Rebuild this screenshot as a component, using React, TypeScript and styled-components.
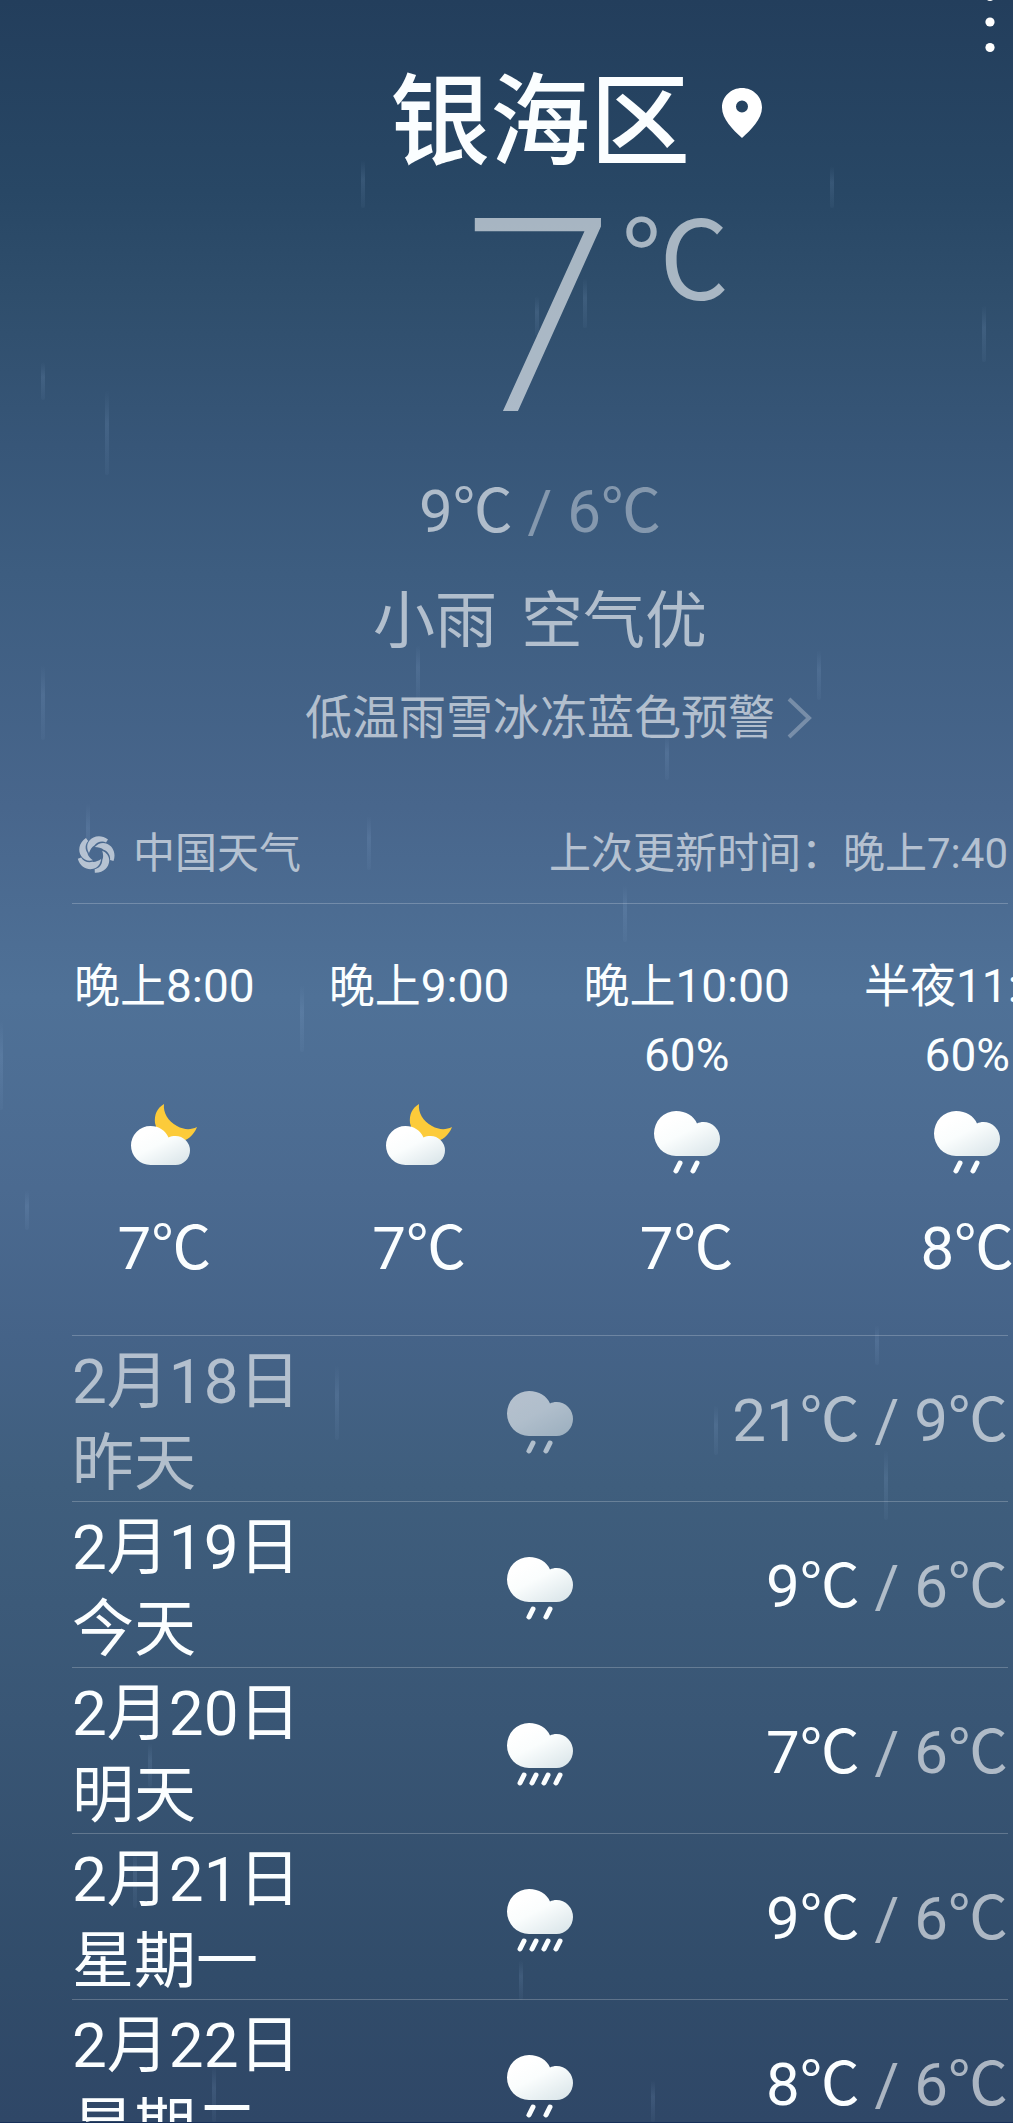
import React, { useId } from "react";
import styled, { createGlobalStyle, css } from "styled-components";

type Sky = "night" | "drizzle" | "rain";

interface Hour {
  time: string;
  chance?: string;
  sky: Sky;
  temp: string;
}

interface Day {
  date: string;
  name: string;
  sky: Sky;
  high: string;
  low: string;
  past?: boolean;
}

const hours: Hour[] = [
  { time: "晚上8:00", sky: "night", temp: "7℃" },
  { time: "晚上9:00", sky: "night", temp: "7℃" },
  { time: "晚上10:00", chance: "60%", sky: "drizzle", temp: "7℃" },
  { time: "半夜11:00", chance: "60%", sky: "drizzle", temp: "8℃" },
];

const days: Day[] = [
  { date: "2月18日", name: "昨天", sky: "drizzle", high: "21℃", low: "9℃", past: true },
  { date: "2月19日", name: "今天", sky: "drizzle", high: "9℃", low: "6℃" },
  { date: "2月20日", name: "明天", sky: "rain", high: "7℃", low: "6℃" },
  { date: "2月21日", name: "星期一", sky: "rain", high: "9℃", low: "6℃" },
  { date: "2月22日", name: "星期二", sky: "drizzle", high: "8℃", low: "6℃" },
];

/* x, top and bottom of every falling streak */
const streaks: [number, number, number][] = [
  [363, 160, 208], [832, 166, 208], [537, 296, 336], [585, 278, 328],
  [984, 305, 362], [43, 362, 400], [107, 390, 475], [43, 665, 740],
  [418, 645, 700], [819, 650, 700], [667, 735, 780], [88, 803, 865],
  [369, 816, 870], [625, 885, 942], [302, 985, 1052], [1, 1020, 1110],
  [27, 1190, 1230], [877, 1325, 1365], [337, 1365, 1440], [716, 1405, 1455],
  [886, 1450, 1520], [150, 1743, 1787], [135, 1850, 1908], [521, 1960, 2000],
  [214, 2065, 2122], [653, 2080, 2122],
];

const GlobalStyle = createGlobalStyle`
  *, *::before, *::after { box-sizing: border-box; }
  body { margin: 0; background: #304866; }
  h1, p, ul { margin: 0; padding: 0; }
  ul { list-style: none; }
  button { border: 0; padding: 0; background: none; color: inherit; font: inherit; cursor: pointer; }
  svg { display: block; }
`;

const bright = "#fbfeff";
const dim = "rgba(255, 255, 255, 0.6)";
const faint = "rgba(255, 255, 255, 0.38)";
const rule = "1px solid rgba(255, 255, 255, 0.22)";

const Screen = styled.main`
  position: relative;
  height: 100vh;
  display: flex;
  flex-direction: column;
  overflow: hidden;
  border-bottom: 1px solid #19315a;
  color: ${bright};
  font-family: Roboto, "Noto Sans CJK SC", sans-serif;
  background: linear-gradient(
    180deg,
    #233e5c 0%,
    #284765 9%,
    #2f4e6c 14%,
    #375678 21%,
    #3d5d80 27%,
    #48668c 38%,
    #4f7197 47%,
    #4b6a90 56%,
    #456388 63%,
    #3f5e7d 70%,
    #395675 81%,
    #314c6a 93%,
    #2f4767 100%
  );
`;

const Rain = styled.svg`
  position: absolute;
  inset: 0;
  width: 100%;
  height: 100%;
  pointer-events: none;
`;

const TopBar = styled.header`
  flex: none;
  display: flex;
  justify-content: flex-end;
  align-items: flex-start;
  height: 68px;
  padding-right: 18px;
`;

const Body = styled.div`
  position: relative;
  flex: 1;
  min-height: 0;
  display: flex;
  flex-direction: column;
  padding-left: 72px;
`;

const centred = css`
  display: grid;
  grid-template-columns: 1fr auto 1fr;
  width: 100%;
  padding-right: 5px;
`;

const Middle = styled.span`
  grid-column: 2;
`;

const Place = styled.h1`
  ${centred}
  align-items: center;
  column-gap: 32px;
  font-size: 100px;
  font-weight: 500;
  line-height: 110px;
`;

const PinSlot = styled.span`
  padding-bottom: 20px;
`;

const Now = styled.p`
  ${centred}
  align-items: start;
  column-gap: 8px;
  margin-top: 40px;
  opacity: 0.6;
`;

const NowValue = styled(Middle)`
  font-size: 266px;
  font-weight: 200;
  line-height: 200px;
  -webkit-text-stroke: 4px ${bright};
`;

const NowUnit = styled.span`
  font-size: 108px;
  font-weight: 400;
  line-height: 88px;
`;

const Range = styled.p`
  margin-top: 64px;
  padding-right: 5px;
  text-align: center;
  font-size: 60px;
  line-height: 60px;
  color: ${faint};
`;

const High = styled.span<{ $tone: string }>`
  color: ${(p) => p.$tone};
`;

const Summary = styled.p`
  display: flex;
  justify-content: center;
  gap: 24px;
  margin-top: 49px;
  padding-right: 5px;
  font-size: 62px;
  line-height: 62px;
  color: ${dim};
`;

const Warning = styled.button`
  ${centred}
  flex: none;
  align-items: center;
  column-gap: 12px;
  margin-top: 41px;
  color: ${dim};
  && {
    font-size: 47px;
    line-height: 48px;
  }
`;

const Source = styled.div`
  display: flex;
  align-items: center;
  justify-content: space-between;
  margin: 91px 5px 0 0;
  padding-bottom: 28px;
  border-bottom: ${rule};
  font-size: 42px;
  line-height: 42px;
  color: ${dim};
`;

const Brand = styled.a`
  display: flex;
  align-items: center;
  gap: 18px;
  padding-left: 5px;
  color: inherit;
  text-decoration: none;
`;

const Hours = styled.ul`
  flex: none;
  display: flex;
  gap: 74px;
  padding: 58px 0 56px 2px;
  overflow-x: auto;
  scrollbar-width: none;
`;

const HourItem = styled.li`
  flex: none;
  display: flex;
  flex-direction: column;
  align-items: center;
  font-size: 46px;
  line-height: 48px;
`;

const Chance = styled.span`
  height: 48px;
  margin: 21px 0 25px;
`;

const HourTemp = styled.span`
  margin-top: 45px;
  font-size: 60px;
  line-height: 60px;
`;

const Days = styled.ul`
  flex: 1;
  min-height: 0;
  margin-right: 5px;
  overflow-y: auto;
  scrollbar-width: none;
`;

const DayItem = styled.li<{ $past?: boolean }>`
  display: grid;
  grid-template-columns: 1fr auto 1fr;
  align-items: center;
  border-top: ${rule};
  color: ${(p) => (p.$past ? dim : "inherit")};
`;

const DayName = styled.p`
  padding-top: 5px;
  margin-bottom: -4px;
  font-size: 62px;
  line-height: 82px;
`;

const DayRange = styled.p`
  padding-top: 5px;
  text-align: right;
  font-size: 60px;
  line-height: 60px;
  color: ${dim};
`;

const Glyph = styled.svg<{ $dim?: boolean }>`
  width: 66px;
  height: 70px;
  opacity: ${(p) => (p.$dim ? 0.6 : 1)};
`;

function SkyIcon({ sky, dim: faded }: { sky: Sky; dim?: boolean }) {
  const id = useId();
  const fill = `url(#${id})`;
  const drops = sky === "rain" ? [17, 29, 41, 53] : [26, 43];
  return (
    <Glyph viewBox="0 0 66 70" $dim={faded} aria-hidden="true">
      <defs>
        <linearGradient id={id} x1="0.25" y1="0.2" x2="0.85" y2="1">
          <stop offset="0" stopColor="#ffffff" />
          <stop offset="0.35" stopColor="#fafdfd" />
          <stop offset="1" stopColor="#dbe6ea" />
        </linearGradient>
      </defs>
      {sky === "night" ? (
        <>
          <path
            d="M33 0C26 4 23 11 24 19C26 30 37 39 48 38C56 37 63 31 66 23C60 26 53 26 46 22C37 17 32 9 33 0Z"
            fill="#fccb3a"
          />
          <path
            d="M19.500 22C28 22 34.500 26.500 37.500 33.500C39.500 32.400 42 32 44.500 32A14.500 14.500 0 0 1 44.500 61H19.500A19.500 19.500 0 0 1 19.500 22Z"
            fill={fill}
          />
        </>
      ) : (
        <>
          <path
            d="M22 7C32 7 40 12 43 19.500C45 18.500 47 18 49.500 18A16.500 17 0 0 1 49.500 52H22A22 22.500 0 0 1 22 7Z"
            fill={fill}
          />
          {drops.map((x) => (
            <path
              key={x}
              d={`M${x} 59L${x - 4} 67`}
              stroke={bright}
              strokeWidth="5"
              strokeLinecap="round"
            />
          ))}
        </>
      )}
    </Glyph>
  );
}

function Streaks() {
  return (
    <Rain aria-hidden="true">
      <defs>
        <linearGradient id="streak" x1="0" y1="0" x2="0" y2="1">
          <stop offset="0" stopColor="#9fc0e8" stopOpacity="0" />
          <stop offset="0.4" stopColor="#9fc0e8" stopOpacity="0.13" />
          <stop offset="1" stopColor="#9fc0e8" stopOpacity="0.04" />
        </linearGradient>
      </defs>
      {streaks.map(([x, top, bottom]) => (
        <rect
          key={`${x}-${top}`}
          x={x - 2}
          y={top}
          width="4"
          height={bottom - top}
          rx="2"
          fill="url(#streak)"
        />
      ))}
    </Rain>
  );
}

export default function App() {
  return (
    <>
      <GlobalStyle />
      <Screen lang="zh-CN">
        <Streaks />
        <TopBar>
          <button type="button" aria-label="更多">
            <svg width="10" height="54" viewBox="0 0 10 54" fill="#fff">
              <circle cx="5" cy="-3.500" r="4.600" />
              <circle cx="5" cy="22" r="4.600" />
              <circle cx="5" cy="47.500" r="4.600" />
            </svg>
          </button>
        </TopBar>
        <Body>
          <Place>
            <Middle>银海区</Middle>
            <PinSlot>
              <svg width="40" height="50" viewBox="0 0 40 50" aria-hidden="true">
                <path
                  fill="#fff"
                  fillRule="evenodd"
                  d="M20 0C31 0 40 8.500 40 19.500C40 31 29 42 20 50C11 42 0 31 0 19.500C0 8.500 9 0 20 0ZM20 12.500A6 6 0 1 0 20 24.500A6 6 0 1 0 20 12.500Z"
                />
              </svg>
            </PinSlot>
          </Place>
          <Now>
            <NowValue>7</NowValue>
            <NowUnit>℃</NowUnit>
          </Now>
          <Range>
            <High $tone={dim}>9℃</High> / 6℃
          </Range>
          <Summary>
            <span>小雨</span>
            <span>空气优</span>
          </Summary>
          <Warning type="button">
            <Middle>低温雨雪冰冻蓝色预警</Middle>
            <svg width="26" height="42" viewBox="0 0 26 42" fill="none" aria-hidden="true">
              <path d="M2 2L22 21L2 40" stroke="#fff" strokeOpacity="0.28" strokeWidth="4" />
            </svg>
          </Warning>
          <Source>
            <Brand href="#source">
              <svg width="38" height="38" viewBox="-19 -19 38 38" fill="currentColor" aria-hidden="true">
                {[0, 72, 144, 216, 288].map((turn) => (
                  <path
                    key={turn}
                    transform={`rotate(${turn})`}
                    d="M-7 -1C-9.500 -5 -9.500 -10 -6.500 -13.500C-3 -18 5 -20 12 -14.500L10 -11.500C6 -13.500 1 -12 -1.600 -8.500C-4 -7.500 -6 -4 -7 -1Z"
                  />
                ))}
              </svg>
              中国天气
            </Brand>
            <span>上次更新时间：晚上7:40</span>
          </Source>
          <Hours>
            {hours.map((hour) => (
              <HourItem key={hour.time}>
                <span>{hour.time}</span>
                <Chance>{hour.chance}</Chance>
                <SkyIcon sky={hour.sky} />
                <HourTemp>{hour.temp}</HourTemp>
              </HourItem>
            ))}
          </Hours>
          <Days>
            {days.map((day) => (
              <DayItem key={day.date} $past={day.past}>
                <DayName>
                  {day.date}
                  <br />
                  {day.name}
                </DayName>
                <SkyIcon sky={day.sky} dim={day.past} />
                <DayRange>
                  <High $tone={day.past ? dim : bright}>{day.high}</High> / {day.low}
                </DayRange>
              </DayItem>
            ))}
          </Days>
        </Body>
      </Screen>
    </>
  );
}
